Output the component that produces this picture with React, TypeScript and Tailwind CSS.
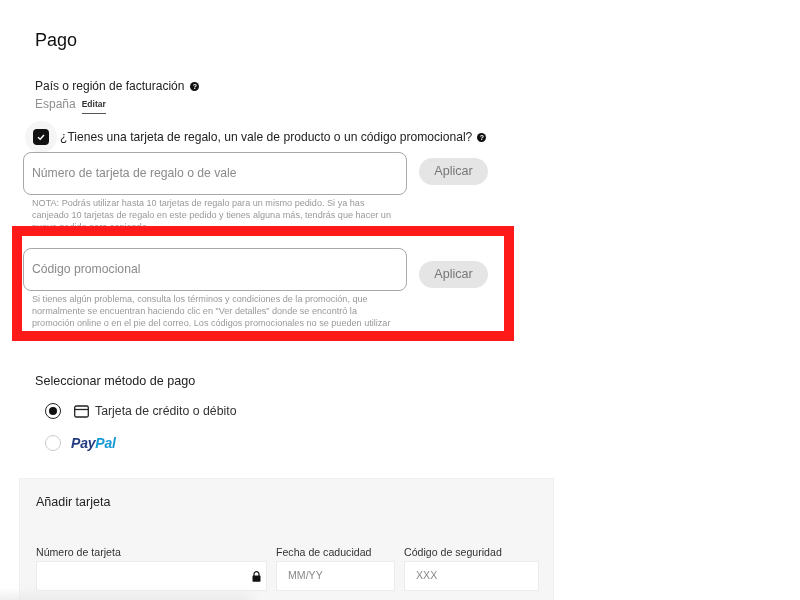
import React from "react";

const HelpDot = () => (
  <span className="inline-flex h-[9px] w-[9px] items-center justify-center rounded-full bg-[#111] text-[7px] font-bold leading-none text-white">
    ?
  </span>
);

const CheckboxRow = () => (
  <div className="mt-[7px] flex h-[32px] items-center pl-[25px]">
    <div className="flex h-[32px] w-[32px] items-center justify-center rounded-full bg-[#f5f5f5]">
      <div className="flex h-[16px] w-[16px] items-center justify-center rounded-[4px] bg-[#111]">
        <svg width="10" height="10" viewBox="0 0 10 10" fill="none">
          <path d="M2 5.2 L4.2 7.2 L8 3" stroke="#fff" strokeWidth="1.5" />
        </svg>
      </div>
    </div>
    <span className="ml-[3px] text-[12.1px] text-[#222]">
      ¿Tienes una tarjeta de regalo, un vale de producto o un código promocional?
    </span>
    <span className="ml-[5px] flex">
      <HelpDot />
    </span>
  </div>
);

const ApplyRow = ({ placeholder, btnOffset }: { placeholder: string; btnOffset: string }) => (
  <div className="flex items-start">
    <div className="flex h-[43px] w-[384px] items-center rounded-[8px] border border-[#a8a8a8] bg-white pl-[8px] text-[12.2px] text-[#8a8a8a]">
      {placeholder}
    </div>
    <div
      className={`ml-[12px] flex h-[27px] w-[69px] items-center justify-center rounded-full bg-[#e5e5e5] text-[12.6px] font-medium text-[#777] ${btnOffset}`}
    >
      Aplicar
    </div>
  </div>
);

const CardField = ({ label, width, value, lock }: { label: string; width: string; value?: string; lock?: boolean }) => (
  <div className={width}>
    <div className="text-[10.6px] leading-[14px] text-[#333]">{label}</div>
    <div className="mt-[2px] flex h-[30px] items-center justify-between border border-[#ececec] bg-white px-[11px] text-[10.6px] text-[#888]">
      <span>{value}</span>
      {lock && (
        <svg width="9" height="11" viewBox="0 0 9 11" className="-mr-[6px]">
          <path d="M2 5V3.2a2.5 2.5 0 0 1 5 0V5" fill="none" stroke="#111" strokeWidth="1.2" />
          <rect x="0.5" y="4.6" width="8" height="6.2" rx="0.8" fill="#111" />
        </svg>
      )}
    </div>
  </div>
);

export default function App() {
  return (
    <div className="relative h-[600px] w-[800px] overflow-hidden bg-white font-['Liberation_Sans',Arial,sans-serif] blur-[0.4px]">
      <div className="pl-[35px] pt-[28px]">
        <h1 className="text-[18px] leading-[24px] text-[#111]">Pago</h1>
        <div className="mt-[26px] flex items-center gap-[6px] text-[12px] leading-[16px] text-[#222]">
          País o región de facturación <HelpDot />
        </div>
        <div className="mt-[2px] flex items-start">
          <span className="text-[12px] leading-[16px] text-[#8f8f8f]">España</span>
          <span className="ml-[6px] mt-[2px] border-b border-[#555] pb-[3px] text-[8.5px] font-bold leading-[12px] text-[#333]">
            Editar
          </span>
        </div>
      </div>

      <CheckboxRow />

      <div className="ml-[23px] mt-[-1px] h-[74px]">
        <ApplyRow placeholder="Número de tarjeta de regalo o de vale" btnOffset="mt-[6px]" />
        <p className="ml-[9px] mt-[2px] w-[364px] text-[9.1px] leading-[12px] text-[#999]">
          NOTA: Podrás utilizar hasta 10 tarjetas de regalo para un mismo pedido. Si ya has canjeado 10 tarjetas de
          regalo en este pedido y tienes alguna más, tendrás que hacer un nuevo pedido para canjearlo.
        </p>
      </div>

      <section className="relative z-10 ml-[12px] h-[115px] w-[502px] overflow-hidden border-[10px] border-[#ff1a1a] bg-white pl-[1px] pt-[12px]">
        <ApplyRow placeholder="Código promocional" btnOffset="mt-[13px]" />
        <p className="ml-[9px] mt-[2px] w-[364px] text-[9.1px] leading-[12.2px] text-[#999]">
          Si tienes algún problema, consulta los términos y condiciones de la promoción, que normalmente se encuentran
          haciendo clic en "Ver detalles" donde se encontró la promoción online o en el pie del correo. Los códigos
          promocionales no se pueden utilizar
        </p>
      </section>

      <div className="pl-[35px] pt-[32px]">
        <h2 className="text-[12.6px] font-medium leading-[16px] text-[#222]">Seleccionar método de pago</h2>
        <div className="ml-[10px] mt-[14px] flex h-[16px] items-center">
          <div className="flex h-[16px] w-[16px] items-center justify-center rounded-full border-[1.5px] border-[#222]">
            <div className="h-[8px] w-[8px] rounded-full bg-[#111]" />
          </div>
          <svg width="15" height="13" viewBox="0 0 15 13" fill="none" className="ml-[13px]">
            <rect x="0.7" y="1" width="13.6" height="11" rx="1.5" stroke="#222" strokeWidth="1.3" />
            <path d="M1 4.5H14" stroke="#222" strokeWidth="1.3" />
          </svg>
          <span className="ml-[6px] text-[12.3px] text-[#333]">Tarjeta de crédito o débito</span>
        </div>
        <div className="ml-[10px] mt-[16px] flex h-[16px] items-center">
          <div className="h-[16px] w-[16px] rounded-full border border-[#ccc]" />
          <span className="ml-[10px] text-[14px] font-extrabold italic tracking-[-0.2px] text-[#253b80]">
            Pay<span className="text-[#179bd7]">Pal</span>
          </span>
        </div>
      </div>

      <div className="ml-[19px] mt-[27px] h-[130px] w-[535px] border border-[#efefef] bg-[#f6f6f6] pl-[16px] pt-[15px]">
        <h3 className="text-[12.5px] font-medium leading-[16px] text-[#222]">Añadir tarjeta</h3>
        <div className="mt-[35px] flex gap-[9px]">
          <CardField label="Número de tarjeta" width="w-[231px]" lock />
          <CardField label="Fecha de caducidad" width="w-[119px]" value="MM/YY" />
          <CardField label="Código de seguridad" width="w-[135px]" value="XXX" />
        </div>
      </div>

      <div className="absolute -bottom-[6px] -left-[10px] z-20 h-[10px] w-[260px] bg-[#e6e6e6] blur-[6px]" />
    </div>
  );
}
